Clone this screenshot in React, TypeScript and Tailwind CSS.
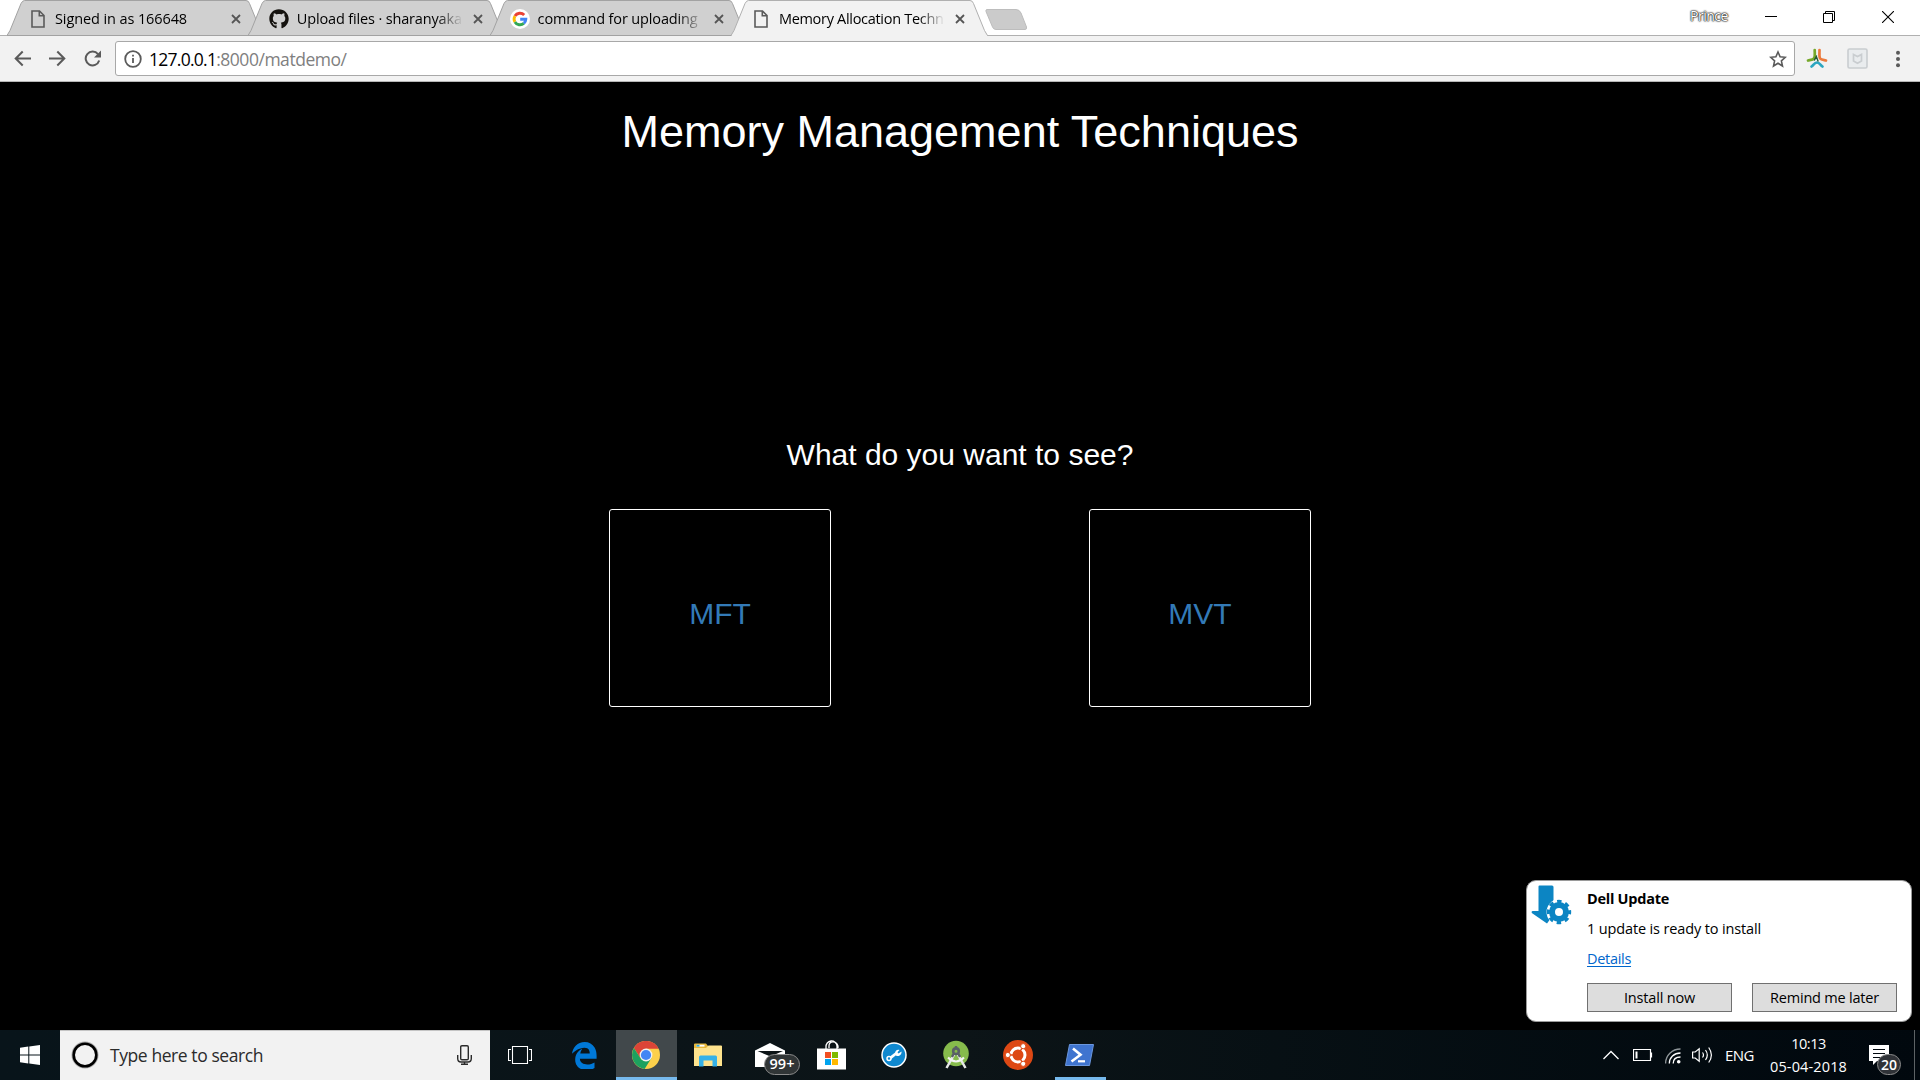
import React from "react";
import { FaGithub } from "react-icons/fa";

function PageIcon() {
  return (
    <svg width="14" height="18" viewBox="0 0 14 18" fill="none" stroke="#5a5a5a" strokeWidth="1.6">
      <path d="M1 1h7.5L13 5.5V17H1z" />
      <path d="M8.3 1v4.7H13" />
    </svg>
  );
}

function GoogleIcon() {
  return (
    <svg width="20" height="20" viewBox="0 0 20 20" fill="none" strokeWidth="2.9">
      <circle cx="10" cy="10" r="10" fill="#fff" />
      <path d="M14.2 6.1A5.9 5.9 0 0 0 4.9 7.1" stroke="#ea4335" />
      <path d="M4.9 7.1a5.9 5.9 0 0 0 0 5.8" stroke="#fbbc05" />
      <path d="M4.9 12.9a5.9 5.9 0 0 0 8.9 1.5" stroke="#34a853" />
      <path d="M13.8 14.4a5.9 5.9 0 0 0 2-4.1H10.2" stroke="#4285f4" />
    </svg>
  );
}

type TabData = { title: string; icon: React.ReactNode; track: string; iconBox: string; active?: boolean };

const tabs: TabData[] = [
  { title: "Signed in as 166648", icon: <PageIcon />, track: "tracking-[-0.1px]", iconBox: "ml-6 w-6" },
  { title: "Upload files · sharanyaka", icon: <FaGithub size={20} color="#15130f" />, track: "tracking-[-0.15px]", iconBox: "ml-[21px] w-[27.5px]" },
  { title: "command for uploading", icon: <GoogleIcon />, track: "tracking-[-0.14px]", iconBox: "ml-5 w-7" },
  { title: "Memory Allocation Techn", icon: <PageIcon />, track: "tracking-[-0.3px]", iconBox: "ml-[23px] w-[25px]", active: true },
];

function Tab({ title, icon, track, iconBox, active }: TabData) {
  return (
    <div className={"relative -mr-[15px] flex h-9 w-[256.3px] shrink-0 items-center " + (active ? "z-10" : "")}>
      <svg className="absolute inset-0" width="257" height="36" viewBox="0 0 257 36">
        <path
          d="M0 35.5L3 30.5L14 3.5Q15.500 .5 17.500 .5H239Q241.500 .5 242.500 3.500L253.500 30.500L256.500 35.500"
          fill={active ? "#f2f2f2" : "#d0d0d0"}
          stroke={active ? "#b0b0b0" : "#a2a2a2"}
        />
        {active ? <path d="M1 35.500H256" stroke="#f2f2f2" /> : <path d="M0 35.500H257" stroke="#a2a2a2" />}
      </svg>
      <div className={"relative flex h-9 items-center pt-[2px] " + iconBox}>{icon}</div>
      <div
        className={
          "relative w-[166px] whitespace-pre text-[14.5px] leading-[36px] pt-px text-black [mask-image:linear-gradient(to_right,black_84%,transparent)] " +
          track
        }
      >
        {title}
      </div>
      <svg className="relative ml-[10px] mt-[2px]" width="10" height="10" viewBox="0 0 10 10" stroke="#555" strokeWidth="1.8">
        <path d="M1 1l8 8M9 1l-8 8" />
      </svg>
    </div>
  );
}

function WindowControls() {
  return (
    <div className="ml-auto flex h-9 items-start">
      <span className="mt-[6px] w-[38px] whitespace-pre text-[14px] leading-5 tracking-[-0.5px] text-white [text-shadow:0_0_1px_#222,0_0_1px_#222,0_0_2px_#333,0_0_2px_#444]">
        Prince
      </span>
      <svg className="mt-[10px] ml-[37px]" width="12" height="13" viewBox="0 0 12 13" stroke="#000">
        <path d="M0 6.500H12" />
      </svg>
      <svg className="mt-[11px] ml-[46px]" width="12" height="12" viewBox="0 0 12 12" fill="none" stroke="#000">
        <path d="M.5 2.500H9.500V11.500H.5zM2.500 2.500V.5H11.500V9.500H9.500" />
      </svg>
      <svg className="mt-[11px] mr-[26px] ml-[47px]" width="12" height="12" viewBox="0 0 12 12" stroke="#000" strokeWidth="1.100">
        <path d="M0 0L12 12M12 0L0 12" />
      </svg>
    </div>
  );
}

function Toolbar() {
  return (
    <div className="flex h-[46px] items-start border-b border-[#b6b6b6] bg-[#f2f2f2] pt-[5px]">
      <svg className="mt-[9px] ml-[14px]" width="17" height="17" viewBox="0 0 17 17" fill="none" stroke="#5a5a5a" strokeWidth="2">
        <path d="M17 8.500H2M8.700 1.500L1.700 8.500l7 7" />
      </svg>
      <svg className="mt-[9px] ml-[18px]" width="17" height="17" viewBox="0 0 17 17" fill="none" stroke="#5a5a5a" strokeWidth="2">
        <path d="M0 8.500H15M8.300 1.500l7 7-7 7" />
      </svg>
      <svg className="mt-[9px] ml-[18px]" width="17" height="17" viewBox="0 0 17 17" fill="none" stroke="#5a5a5a" strokeWidth="2">
        <path d="M14 4.200A6.900 6.900 0 1 0 15.200 10.500" />
        <path d="M17 .5V7.500H10z" fill="#5a5a5a" stroke="none" />
      </svg>
      <div className="ml-[14px] flex h-[35px] w-[1680px] items-center rounded-[3px] border border-[#a8a8a8] bg-white">
        <svg className="ml-[8px]" width="18" height="18" viewBox="0 0 18 18" fill="none" stroke="#5a5a5a" strokeWidth="1.800">
          <circle cx="9" cy="9" r="7.800" />
          <path d="M9 8v5M9 4.800v1.700" />
        </svg>
        <span className="ml-[7px] whitespace-pre text-[17.5px] leading-8 tracking-[-0.74px] text-black">127.0.0.1</span>
        <span className="whitespace-pre text-[17.5px] leading-8 tracking-[-0.47px] text-[#808080]">:8000/matdemo/</span>
        <svg className="mr-[7px] ml-auto" width="18" height="18" viewBox="0 0 18 18" fill="none" stroke="#5a5a5a" strokeWidth="1.600">
          <path d="M9 2l2.100 4.800 5.200.5-3.900 3.500 1.100 5.200L9 13.300 4.500 16l1.100-5.200L1.700 7.300l5.200-.5z" />
        </svg>
      </div>
      <svg className="mt-[7px] ml-[11px]" width="22" height="21" viewBox="0 0 22 21" fill="none" strokeLinecap="round">
        <path d="M8.700 2C8.700 6 9.300 9 8 10.500S4 12 2 12.500" stroke="#76a82a" strokeWidth="2.700" />
        <path d="M13.500 2c0 4-.5 7 .6 8.500S18 12 20 12.500" stroke="#ec7a3c" strokeWidth="2.700" />
        <path d="M5.500 18.500c2-1.500 3-4 5.500-4s3.500 2.500 5.500 4" stroke="#2ba6c0" strokeWidth="2.700" />
        <path d="M10.500 8L8.500 12M10.500 9l1.500 4" stroke="#235a35" strokeWidth="1.400" />
      </svg>
      <svg className="mt-[7px] ml-[19px]" width="21" height="21" viewBox="0 0 21 21" fill="none">
        <rect x="1" y="1" width="19" height="19" rx="1.500" fill="#e9ecee" stroke="#c9cdd0" strokeWidth="1.600" />
        <path d="M6.500 6.500l4 2 4-2v6.500l-4 2.200-4-2.200z" stroke="#c9cdd0" strokeWidth="1.700" />
      </svg>
      <svg className="mt-[9px] ml-[27px]" width="6" height="18" viewBox="0 0 6 18" fill="#5a5a5a">
        <circle cx="3" cy="2.700" r="2" />
        <circle cx="3" cy="9" r="2" />
        <circle cx="3" cy="15.200" r="2" />
      </svg>
    </div>
  );
}

function UpdateToast() {
  const button =
    "flex h-[29px] w-[145px] items-center justify-center whitespace-pre border border-[#707070] bg-[#dddddd] text-[14.5px] pt-px";
  return (
    <div className="absolute top-[880px] left-[1526px] flex h-[142px] w-[386px] rounded-[10px] border border-[#9a9a9a] bg-white text-[14.5px] text-black">
      <svg className="mt-[4px] ml-[4px]" width="41" height="40" viewBox="0 0 41 40">
        <path d="M7.500 1.500Q7.500 .5 8.500 .5H21Q22.500 .5 22.500 2V15L18 20.500 16 27 20 33 16 38.500 .8 28Q0 26.500 1.500 26H7.500z" fill="#0c85c3" />
        <g transform="translate(28 27)">
          <circle r="12.500" fill="#fff" />
          <circle r="7" fill="none" stroke="#0c85c3" strokeWidth="6" />
          <circle r="10.600" fill="none" stroke="#0c85c3" strokeWidth="3.200" strokeDasharray="4.400 3.925" strokeDashoffset="2.200" />
        </g>
      </svg>
      <div className="ml-[15px] flex flex-col">
        <span className="mt-2 h-5 whitespace-pre leading-5 font-bold tracking-[-0.26px]">Dell Update</span>
        <span className="mt-[10px] h-5 whitespace-pre leading-5 tracking-[-0.14px]">1 update is ready to install</span>
        <span className="mt-[10px] h-5 whitespace-pre leading-5 tracking-[-0.3px] text-[#0066cc] underline decoration-1 underline-offset-2">Details</span>
        <div className="mt-[14px] flex gap-5">
          <div className={button + " tracking-[-0.18px]"}>Install now</div>
          <div className={button + " tracking-[-0.2px]"}>Remind me later</div>
        </div>
      </div>
    </div>
  );
}

function TaskCell({ children, className = "" }: { children: React.ReactNode; className?: string }) {
  return <div className={"flex h-[50px] shrink-0 items-center justify-center " + className}>{children}</div>;
}

function Taskbar() {
  return (
    <div className="flex h-[50px] items-start bg-linear-to-r from-[#08141a] via-[#0c1417] to-[#01080e] text-white">
      <TaskCell className="w-[60px]">
        <svg width="20" height="20" viewBox="0 0 20 20" fill="#fff">
          <path d="M0 2.800L8.300 1.600V9.500H0zM9.300 1.400L20 0V9.500H9.300zM0 10.500H8.300V18.500L0 17.300zM9.300 10.500H20V20L9.300 18.600z" />
        </svg>
      </TaskCell>
      <div className="flex h-[50px] w-[430px] items-center border-t border-[#c4c4c4] bg-[#f2f2f2]">
        <svg className="ml-[11px] -mt-px" width="28" height="28" viewBox="0 0 28 28" fill="none">
          <circle cx="14" cy="14" r="12.600" stroke="#a9a9a9" strokeWidth="1.800" />
          <circle cx="14" cy="14" r="11.300" stroke="#000" strokeWidth="2.600" />
        </svg>
        <span className="ml-[11px] whitespace-pre text-[17.5px] tracking-[-0.42px] text-[#2b2b2b]">Type here to search</span>
        <svg className="mr-[18px] -mt-px ml-auto" width="15" height="20" viewBox="0 0 15 20" fill="none" stroke="#2b2b2b" strokeWidth="1.400">
          <rect x="3.700" y=".7" width="7.600" height="14" rx="1.200" />
          <path d="M.7 10v3.500Q.7 17 4 17h7q3.300 0 3.300-3.500V10M7.500 17v2.300M4 19.300h7" />
        </svg>
      </div>
      <TaskCell className="w-[60px]">
        <svg width="24" height="18" viewBox="0 0 24 18" fill="none" stroke="#fff" strokeWidth="1.100">
          <path d="M4.500 .5H19.500V17.500H4.500zM3 3.500H.5V14.500H3M21 3.500h2.500V14.500H21" />
        </svg>
      </TaskCell>
      <TaskCell className="w-[66px] pl-[2px]">
        <svg width="25" height="27" viewBox="0 0 25 27">
          <path
            fill="#0078d7"
            d="M0 11.800C.8 5.200 5.500 0 12.700 0c4.300 0 7.800 2 9.900 5.500 1.500 2.600 2 5.300 2 8.500v2.800H7.900c.1 6.900 10.200 6.700 14.600 3.600v5.700c-2.600 1.600-8.400 2.900-12.900 1.200C5.700 25.800 3.200 22.200 3.200 18c-.1-5.500 2.700-9.100 7.100-11.200-.9 1.200-1.600 2.500-2 4.600h9.400s.6-5.600-5.300-5.600C6.900 6 2.800 9.200 0 11.800z"
          />
        </svg>
      </TaskCell>
      <div className="flex h-[50px] w-[61px] shrink-0 items-center justify-center border-b-[3px] border-[#76b9ed] bg-[#41484b] pt-[3px] pr-[2px]">
        <svg width="28" height="28" viewBox="0 0 28 28">
          <circle cx="14" cy="14" r="14" fill="#fcd04b" />
          <path d="M14 14L14 7.700H26.600A14 14 0 0 0 1.900 7L8.500 17.200z" fill="#db4437" />
          <path d="M1.900 7A14 14 0 0 0 12.600 27.900L19.500 17.100 8.500 17.200z" fill="#1da15f" />
          <circle cx="14" cy="14" r="6.400" fill="#f1f1f1" />
          <circle cx="14" cy="14" r="5.100" fill="#4285f4" />
        </svg>
      </div>
      <TaskCell className="w-[61px] pb-px">
        <svg width="28" height="24" viewBox="0 0 28 24">
          <path d="M0 1.500Q0 .5 1 .5H12L14 3H27Q28 3 28 4V23H0z" fill="#e8b83a" />
          <path d="M0 5H12L14.500 2.500H27Q28 2.500 28 3.500V23H0z" fill="#fee38d" />
          <rect x="2.500" y="1.800" width="8" height="1.800" fill="#fff" />
          <rect x="2.500" y="1.800" width="3" height="1.800" fill="#2ea8e0" />
          <path d="M5 23.500V14Q5 12.500 6.500 12.500H21.500Q23 12.500 23 14V23.500H18.500V17.500H9.500V23.500z" fill="#35b1e8" />
        </svg>
      </TaskCell>
      <TaskCell className="relative w-[62px]">
        <svg className="ml-[2px] -mt-px" width="30" height="24" viewBox="0 0 30 24">
          <path d="M0 7.500L15 0 30 7.500V24H0z" fill="#fff" />
          <path d="M2.500 8H28L15.500 13.500z" fill="#0c1417" />
          <path d="M14 13L20 11.500 17 16z" fill="#0c1417" />
        </svg>
        <span className="absolute top-6 left-[26px] flex h-[21px] w-[36px] items-center justify-center rounded-full border border-[#8b8b8b] bg-[#303536] text-[14.5px] leading-none font-semibold">
          99+
        </span>
      </TaskCell>
      <TaskCell className="w-[63px] pb-px">
        <svg width="29" height="30" viewBox="0 0 29 30">
          <path d="M9 9V7a5.500 5.500 0 0 1 11-1V9M12 8V6c0-5 7-6 9 0V8" fill="none" stroke="#fff" strokeWidth="1.300" />
          <path d="M0 8.500H29V29.500H0z" fill="#fff" />
          <rect x="8" y="12" width="6" height="6" fill="#f25022" />
          <rect x="15" y="12" width="6" height="6" fill="#7fba00" />
          <rect x="8" y="19" width="6" height="6" fill="#00a4ef" />
          <rect x="15" y="19" width="6" height="6" fill="#ffb900" />
        </svg>
      </TaskCell>
      <TaskCell className="w-[62px]">
        <svg width="26" height="26" viewBox="0 0 26 26">
          <circle cx="13" cy="13" r="12" fill="#0f88cf" stroke="#fff" strokeWidth="1.500" />
          <path d="M9.500 15.800L15 11.500" stroke="#fff" strokeWidth="2.800" />
          <circle cx="8" cy="16.500" r="2" fill="none" stroke="#fff" strokeWidth="1.500" />
          <path d="M14 12.500C13.500 9 16 7.300 18.500 8L16.500 10.200 17.500 11.500 20.500 9.500C21 13 17.500 15 15 13.500z" fill="#fff" />
        </svg>
      </TaskCell>
      <TaskCell className="w-[62px] pb-px">
        <svg width="26" height="29" viewBox="0 0 26 29" fill="none">
          <circle cx="13" cy="13.500" r="12.800" fill="#86bb4c" />
          <path d="M12 13L3.500 28M14 13l8.500 15" stroke="#e6e8e8" strokeWidth="2.500" />
          <path d="M5 17.500Q13 25.500 21 17.500" stroke="#f4f4f4" strokeWidth="2" />
          <circle cx="13" cy="11.200" r="2.800" stroke="#596066" strokeWidth="2.600" />
          <path d="M13 6V9M10.500 14l-1.500 3M15.500 14l1.500 3" stroke="#596066" strokeWidth="2.400" />
        </svg>
      </TaskCell>
      <TaskCell className="w-[62px]">
        <svg width="30" height="30" viewBox="0 0 30 30" fill="none">
          <circle cx="15" cy="15" r="15" fill="#dd4814" />
          <circle cx="15" cy="15" r="7" stroke="#fff" strokeWidth="3" />
          <path d="M15 15L4 15M15 15l6-10.400M15 15l6 10.400" stroke="#dd4814" strokeWidth="1.400" />
          <g fill="#fff" stroke="#dd4814" strokeWidth="1">
            <circle cx="4.800" cy="15" r="2.600" />
            <circle cx="20.200" cy="6.200" r="2.600" />
            <circle cx="20.200" cy="23.800" r="2.600" />
          </g>
        </svg>
      </TaskCell>
      <div className="ml-[6px] flex h-[50px] w-[51px] shrink-0 items-center justify-center border-b-[3px] border-[#76b9ed] pt-[3px] pr-[2px]">
        <svg width="29" height="22" viewBox="0 0 29 22" fill="none">
          <path d="M4.500 .5H28.500L24.500 21.500H.5z" fill="#3f74cf" stroke="#6b97dd" />
          <path d="M8 4.500L15.500 10.800 6.500 17.500" stroke="#fff" strokeWidth="2.600" />
          <path d="M13 17.300H20" stroke="#fff" strokeWidth="2.200" />
        </svg>
      </div>
      <div className="ml-auto flex h-[50px] items-center">
        <svg width="16" height="10" viewBox="0 0 16 10" fill="none" stroke="#fff" strokeWidth="1.300">
          <path d="M.5 9L8 1.500 15.500 9" />
        </svg>
        <svg className="ml-[14px]" width="20" height="12" viewBox="0 0 20 12" fill="none" stroke="#fff">
          <path d="M.5 .5H17.500V11.500H.5zM18.500 3.500V8.500" strokeWidth="1.200" />
          <rect x="2.500" y="2.500" width="2" height="7" fill="#fff" stroke="none" />
        </svg>
        <svg className="mt-px ml-3" width="16" height="16" viewBox="0 0 16 16" fill="none" strokeWidth="1.300">
          <path d="M.6 15.500C.6 7.500 7 1 15.500 1" stroke="#8f9699" />
          <path d="M4.300 15.500C4.300 9.500 9 5 15.500 5" stroke="#fff" />
          <path d="M8.200 15.500C8.200 11.500 11 9 15.500 9" stroke="#fff" />
          <circle cx="13.700" cy="13.800" r="1.800" fill="#fff" />
        </svg>
        <svg className="ml-[11px]" width="21" height="18" viewBox="0 0 21 18" fill="none" stroke="#fff" strokeWidth="1.200">
          <path d="M.6 6H3.200L7.200 2.800V15.200L3.200 12H.6z" />
          <path d="M10.500 6.500q2 2.500 0 5M13.500 4q3.600 5 0 10M16.700 1.500q5.400 7.500 0 15" />
        </svg>
        <span className="ml-[12px] w-[29px] whitespace-pre text-[15px] tracking-[-0.51px]">ENG</span>
        <div className="ml-[16px] flex w-[77px] flex-col items-center whitespace-pre text-[14.5px]">
          <span className="h-[23px] leading-[23px] tracking-[-0.5px]">10:13</span>
          <span className="h-[23px] leading-[23px] tracking-[0.13px]">05-04-2018</span>
        </div>
        <div className="relative ml-[22px] h-[50px] w-8">
          <svg className="mt-[15px]" width="20" height="20" viewBox="0 0 20 20">
            <path d="M0 0H20V16H8L4 20V16H0z" fill="#fff" />
            <path d="M4 4.500H16M4 8.500H16M4 12.500H12" stroke="#01080e" strokeWidth="1.200" />
          </svg>
          <span className="absolute top-6 left-2 flex h-[21px] w-6 items-center justify-center rounded-full border border-[#8b8b8b] bg-[#303338] text-[14px] leading-none font-semibold">
            20
          </span>
        </div>
        <div className="mr-[5px] ml-[13px] h-[50px] w-px bg-[#5d6265]" />
      </div>
    </div>
  );
}

export default function App() {
  return (
    <div className="relative flex h-[1080px] w-[1920px] flex-col overflow-hidden bg-black font-['Open_Sans','Noto_Sans',sans-serif]">
      <div className="relative flex h-9 items-start bg-white pl-[7px] shadow-[inset_0_-1px_0_#b0b0b0]">
        {tabs.map((t) => (
          <Tab key={t.title} {...t} />
        ))}
        <svg className="mt-[9px] ml-[13px]" width="43" height="21" viewBox="0 0 43 21">
          <path d="M2 .5H31Q34.500 .5 36 4L41.500 18Q42 20.500 40 20.500H11Q8.500 20.500 7.500 18L1 2.500Q.5 .5 2 .5z" fill="#cbcbcb" stroke="#bdbdbd" />
        </svg>
        <WindowControls />
      </div>
      <Toolbar />
      <main className="flex h-[948px] flex-col items-center pt-[25px] font-['Liberation_Sans',Arial,sans-serif] text-white">
        <h1 className="h-[50px] text-[45px] leading-[50px]">Memory Management Techniques</h1>
        <h3 className="mt-[281px] h-[33px] text-[30px] leading-[33px]">What do you want to see?</h3>
        <div className="mt-[38px] flex gap-[258px]">
          {["MFT", "MVT"].map((label) => (
            <div key={label} className="flex h-[198px] w-[222px] justify-center rounded-[3px] border border-white pt-[87px]">
              <span className="text-[30px] leading-[33px] text-[#337ab7]">{label}</span>
            </div>
          ))}
        </div>
      </main>
      <Taskbar />
      <UpdateToast />
    </div>
  );
}
